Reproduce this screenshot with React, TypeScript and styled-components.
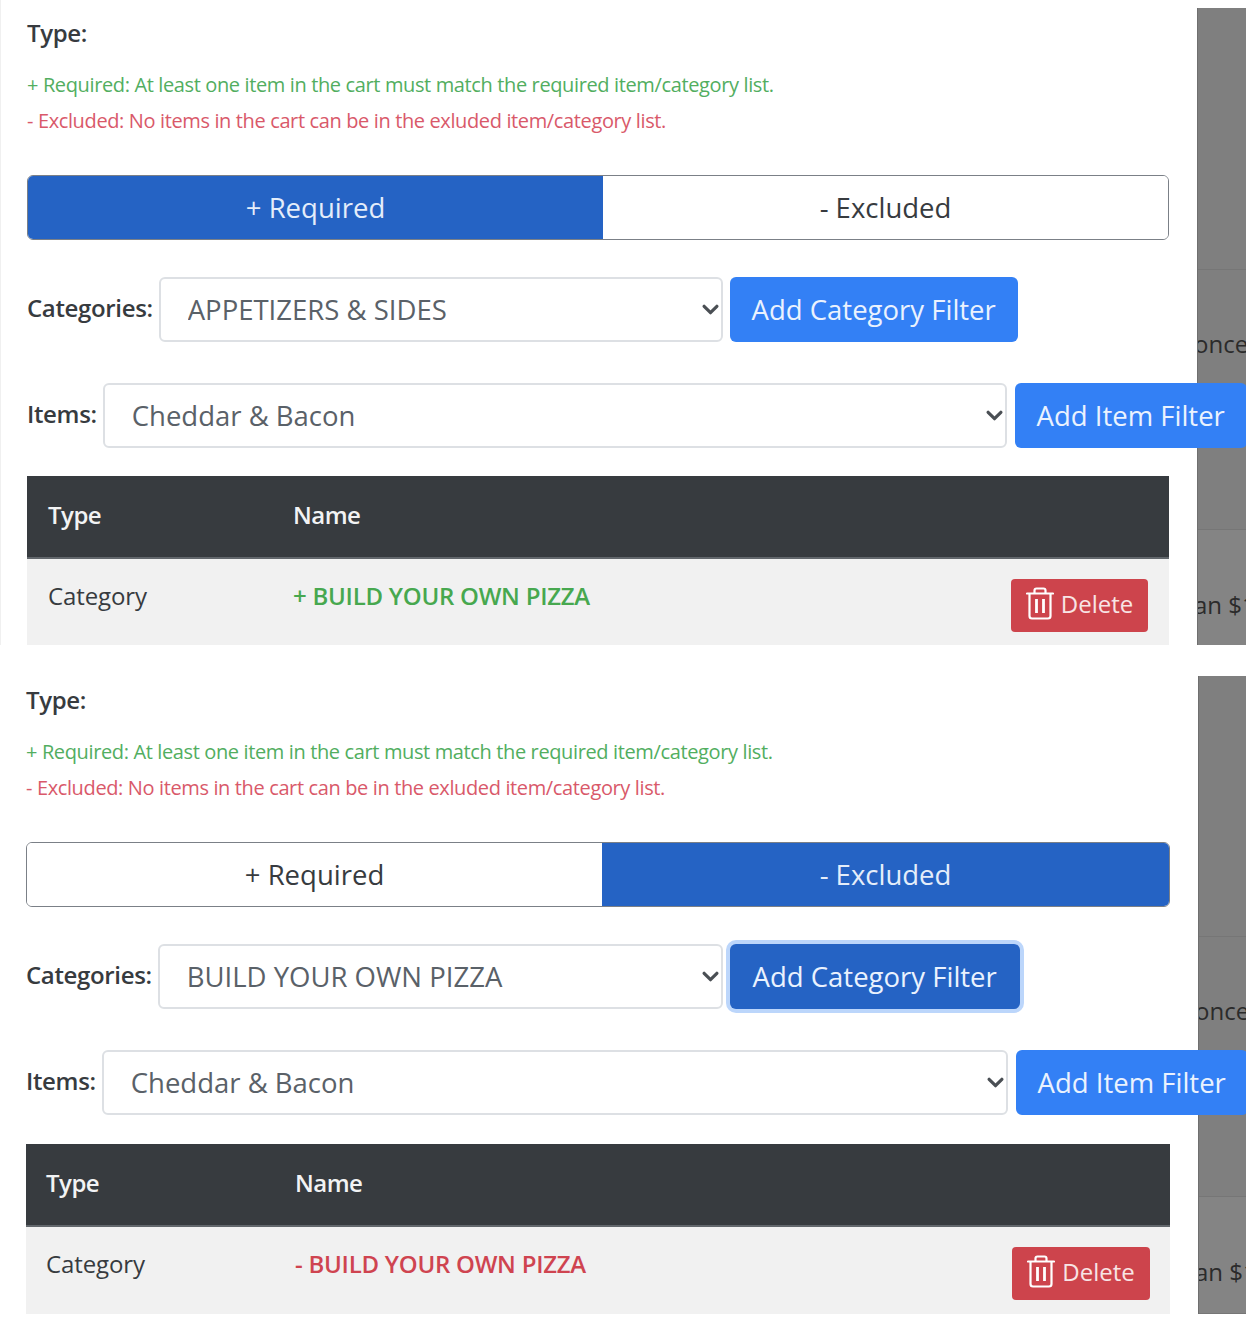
import { createGlobalStyle, styled } from 'styled-components';

type FilterMode = 'required' | 'excluded';

const GlobalStyle = createGlobalStyle`
  html, body {
    margin: 0;
    padding: 0;
    background: #fff;
  }
  body {
    font-family: 'Open Sans', 'Liberation Sans', sans-serif;
    color: #373b3f;
  }
`;

const chevron = encodeURIComponent(
  `<svg xmlns="http://www.w3.org/2000/svg" viewBox="0 0 16 16"><path fill="none" stroke="#4a4f54" stroke-width="3" stroke-linecap="round" stroke-linejoin="round" d="M2 5l6 6 6-6"/></svg>`
);

function TrashIcon() {
  return (
    <svg width="28" height="33" viewBox="0 0 28 33" fill="none" stroke="#fff" strokeWidth="2.2">
      <path d="M1 6.500h26" strokeLinecap="round" />
      <path d="M8.500 6V3.500Q8.500 1.500 10.500 1.500h7Q19.500 1.500 19.500 3.500V6" />
      <path d="M3.500 7V29Q3.500 31.500 6 31.500H22Q24.500 31.500 24.500 29V7" />
      <path d="M10.500 12v14M17.500 12v14" strokeWidth="2.800" />
    </svg>
  );
}

function FilterPanel({
  mode,
  category,
  focused,
}: {
  mode: FilterMode;
  category: string;
  focused?: boolean;
}) {
  const isRequired = mode === 'required';
  const inset = isRequired ? 21 : 20;
  return (
    <Panel $second={!isRequired}>
      <Backdrop $second={!isRequired}>
        <BackdropRow $height={isRequired ? 262 : 261} />
        <BackdropRow $height={260}>
          <BackdropText $top={58}>once</BackdropText>
        </BackdropRow>
        <BackdropRow $height={117} $light>
          <BackdropText $top={59}>an $1</BackdropText>
        </BackdropRow>
      </Backdrop>
      <Content $second={!isRequired}>
        <TypeLabel>Type:</TypeLabel>
        <HelpText $color="#52ae5f">
          + Required: At least one item in the cart must match the required item/category list.
        </HelpText>
        <HelpText $color="#d9596a">
          - Excluded: No items in the cart can be in the exluded item/category list.
        </HelpText>
        <Toggle $width={isRequired ? 1142 : 1144}>
          <ToggleOption $active={isRequired}>+ Required</ToggleOption>
          <ToggleOption $active={!isRequired}>- Excluded</ToggleOption>
        </Toggle>
        <CategoryRow>
          <FieldLabel>Categories:</FieldLabel>
          <Select $width={isRequired ? 564 : 565} value={category} onChange={() => undefined}>
            <option>{category}</option>
          </Select>
          <AddButton $width={isRequired ? 288 : 290} $focused={focused}>
            Add Category Filter
          </AddButton>
        </CategoryRow>
        <ItemRow>
          <FieldLabel>Items:</FieldLabel>
          <Select $width={isRequired ? 904 : 906} value="Cheddar & Bacon" onChange={() => undefined}>
            <option>Cheddar &amp; Bacon</option>
          </Select>
          <AddItemButton $width={232}>Add Item Filter</AddItemButton>
        </ItemRow>
        <FilterTable $width={isRequired ? 1142 : 1144} $gap={isRequired ? 28 : 29}>
          <thead>
            <tr>
              <HeadCell $width={isRequired ? 245 : 249} $inset={inset}>
                Type
              </HeadCell>
              <HeadCell $inset={inset}>Name</HeadCell>
              <HeadCell />
            </tr>
          </thead>
          <tbody>
            <tr>
              <BodyCell $inset={inset}>Category</BodyCell>
              <NameCell $inset={inset} $color={isRequired ? '#47a84f' : '#cf4450'}>
                {isRequired ? '+' : '-'} BUILD YOUR OWN PIZZA
              </NameCell>
              <ActionCell $inset={inset}>
                <DeleteButton $width={isRequired ? 137 : 138}>
                  <TrashIcon />
                  Delete
                </DeleteButton>
              </ActionCell>
            </tr>
          </tbody>
        </FilterTable>
      </Content>
    </Panel>
  );
}

export default function App() {
  return (
    <Page>
      <GlobalStyle />
      <FilterPanel mode="required" category="APPETIZERS & SIDES" />
      <FilterPanel mode="excluded" category="BUILD YOUR OWN PIZZA" focused />
    </Page>
  );
}

const Page = styled.main`
  width: 1246px;
  height: 1320px;
  overflow: hidden;
  display: flex;
  flex-direction: column;
  gap: 31px;
`;

const Panel = styled.section<{ $second: boolean }>`
  position: relative;
  flex: none;
  height: ${(p) => (p.$second ? 638 : 645)}px;
  overflow: hidden;
  border-left: ${(p) => (p.$second ? 'none' : '1px solid #f0f0f0')};
`;

const Backdrop = styled.div<{ $second: boolean }>`
  position: absolute;
  top: ${(p) => (p.$second ? 0 : 8)}px;
  left: ${(p) => (p.$second ? 1198 : 1196)}px;
  right: 0;
  bottom: 0;
  overflow: hidden;
  border-left: 1px solid #6f6f6f;
  display: flex;
  flex-direction: column;
  background: #7f7f7f;
`;

const BackdropRow = styled.div<{ $height: number; $light?: boolean }>`
  flex: none;
  height: ${(p) => p.$height}px;
  box-sizing: border-box;
  border-bottom: 1px solid #767676;
  background: ${(p) => (p.$light ? '#848484' : '#7f7f7f')};
`;

const BackdropText = styled.div<{ $top: number }>`
  padding-top: ${(p) => p.$top}px;
  margin-left: -4px;
  font-size: 24px;
  line-height: 32px;
  color: #2b2b2b;
  white-space: nowrap;
`;

const Content = styled.div<{ $second: boolean }>`
  position: relative;
  box-sizing: border-box;
  width: 1246px;
  height: 100%;
  padding: ${(p) => (p.$second ? '8px 0 0 26px' : '17px 0 0 26px')};
  display: flex;
  flex-direction: column;
  align-items: flex-start;

  & > * {
    flex: none;
  }
`;

const TypeLabel = styled.div`
  font-size: 24px;
  line-height: 32px;
  font-weight: 600;
  letter-spacing: -0.35px;
  margin-bottom: 23px;
`;

const HelpText = styled.div<{ $color: string }>`
  font-size: 20px;
  line-height: 26px;
  letter-spacing: -0.37px;
  color: ${(p) => p.$color};
  margin-bottom: 10px;
`;

const Toggle = styled.div<{ $width: number }>`
  box-sizing: border-box;
  width: ${(p) => p.$width}px;
  height: 65px;
  margin-top: 31px;
  display: grid;
  grid-template-columns: 575px 1fr;
  border: 1px solid #7b8087;
  border-radius: 6px;
  overflow: hidden;
`;

const ToggleOption = styled.div<{ $active: boolean }>`
  display: flex;
  align-items: center;
  justify-content: center;
  font-size: 27.5px;
  background: ${(p) => (p.$active ? '#2563c4' : '#fff')};
  color: ${(p) => (p.$active ? '#e4edfa' : '#373b3f')};
`;

const CategoryRow = styled.div`
  margin-top: 37px;
  display: flex;
  align-items: center;
  gap: 6px;
`;

const ItemRow = styled.div`
  margin-top: 41px;
  display: flex;
  align-items: center;
  gap: 6px;
`;

const FieldLabel = styled.label`
  font-size: 24px;
  font-weight: 600;
  letter-spacing: -0.35px;
  margin-bottom: 4px;
`;

const Select = styled.select<{ $width: number }>`
  appearance: none;
  box-sizing: border-box;
  height: 65px;
  flex: none;
  width: ${(p) => p.$width}px;
  padding: 0 27px;
  border: 2px solid #dde0e4;
  border-radius: 6px;
  background: #fff url("data:image/svg+xml,${chevron}") no-repeat right 2px center / 17px 17px;
  font-family: inherit;
  font-size: 27.5px;
  color: #5a6168;
`;

const AddButton = styled.button<{ $width: number; $focused?: boolean }>`
  box-sizing: border-box;
  height: 65px;
  flex: none;
  width: ${(p) => p.$width}px;
  margin-left: 1px;
  padding: 0;
  border: none;
  border-radius: 6px;
  font-family: inherit;
  font-size: 27.5px;
  background: ${(p) => (p.$focused ? '#2563c4' : '#3380f5')};
  color: #eaf2fe;
  box-shadow: ${(p) => (p.$focused ? '0 0 0 4px #bcd6fb' : 'none')};
`;

const AddItemButton = styled(AddButton)`
  margin-left: 2px;
`;

const FilterTable = styled.table<{ $width: number; $gap: number }>`
  margin-top: ${(p) => p.$gap}px;
  width: ${(p) => p.$width}px;
  border-collapse: collapse;
`;

const HeadCell = styled.th<{ $width?: number; $inset?: number }>`
  width: ${(p) => (p.$width ? `${p.$width}px` : 'auto')};
  height: 82px;
  box-sizing: border-box;
  padding: 0 ${(p) => p.$inset ?? 21}px 5px;
  background: #373b3f;
  border-bottom: 2px solid #62676c;
  color: #f2f3f4;
  font-size: 24px;
  font-weight: 600;
  letter-spacing: -0.5px;
  text-align: left;
`;

const BodyCell = styled.td<{ $inset: number }>`
  height: 88px;
  box-sizing: border-box;
  padding: 0 ${(p) => p.$inset}px 15px;
  background: #f1f1f1;
  font-size: 24px;
  letter-spacing: -0.1px;
`;

const NameCell = styled(BodyCell)<{ $color: string }>`
  font-weight: 600;
  letter-spacing: -0.25px;
  color: ${(p) => p.$color};
`;

const ActionCell = styled(BodyCell)`
  padding: 5px ${(p) => p.$inset}px 0 0;
  text-align: right;
`;

const DeleteButton = styled.button<{ $width: number }>`
  box-sizing: border-box;
  width: ${(p) => p.$width}px;
  height: 53px;
  display: inline-flex;
  align-items: center;
  justify-content: center;
  gap: 7px;
  vertical-align: middle;
  padding: 0 0 3px;
  border: none;
  border-radius: 4px;
  background: #cd444c;
  color: #f8e4e5;
  font-family: inherit;
  font-size: 24px;
`;
